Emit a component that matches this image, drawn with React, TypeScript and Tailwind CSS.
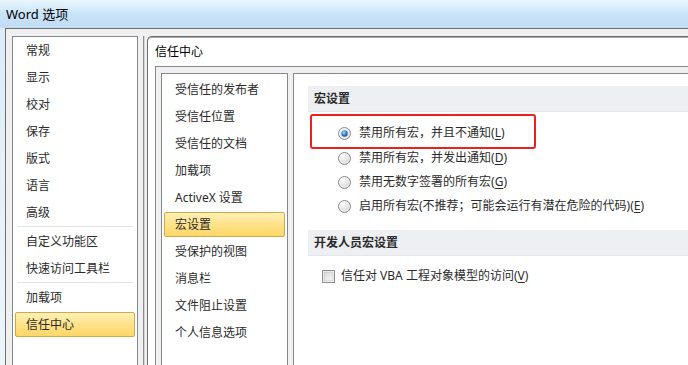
import React from "react";

const leftNav = [
  { label: "常规" },
  { label: "显示" },
  { label: "校对" },
  { label: "保存" },
  { label: "版式" },
  { label: "语言" },
  { label: "高级", sepAfter: true },
  { label: "自定义功能区" },
  { label: "快速访问工具栏", sepAfter: true },
  { label: "加载项" },
  { label: "信任中心", active: true },
];

const trustNav = [
  "受信任的发布者",
  "受信任位置",
  "受信任的文档",
  "加载项",
  "ActiveX 设置",
  "宏设置",
  "受保护的视图",
  "消息栏",
  "文件阻止设置",
  "个人信息选项",
];

const Radio = ({ checked }: { checked?: boolean }) => (
  <svg width="13" height="13" viewBox="0 0 13 13" className="shrink-0">
    <defs>
      <radialGradient id="rg" cx="0.35" cy="0.3" r="0.8">
        <stop offset="0" stopColor="#ffffff" />
        <stop offset="1" stopColor="#cfcfcf" />
      </radialGradient>
      <radialGradient id="rb" cx="0.4" cy="0.35" r="0.7">
        <stop offset="0" stopColor="#9fd8fb" />
        <stop offset="0.6" stopColor="#2e7fc9" />
        <stop offset="1" stopColor="#1c4f8f" />
      </radialGradient>
    </defs>
    <circle cx="6.5" cy="6.5" r="6" fill="url(#rg)" stroke="#8c8e90" strokeWidth="1" />
    <circle cx="6.5" cy="6.5" r="4.5" fill="none" stroke="#f4f4f4" strokeWidth="1" />
    {checked && <circle cx="6.5" cy="6.5" r="3.2" fill="url(#rb)" />}
  </svg>
);

const Check = () => (
  <svg width="13" height="13" viewBox="0 0 13 13" className="shrink-0">
    <defs>
      <linearGradient id="cg" x1="0" y1="0" x2="1" y2="1">
        <stop offset="0" stopColor="#d6d6d6" />
        <stop offset="1" stopColor="#fafafa" />
      </linearGradient>
    </defs>
    <rect x="0.5" y="0.5" width="12" height="12" fill="#fff" stroke="#8e8f8f" />
    <rect x="2" y="2" width="9" height="9" fill="url(#cg)" stroke="#b4b4b4" strokeWidth="0.6" />
  </svg>
);

const Acc = ({ text, k }: { text: string; k: string }) => (
  <span>
    {text}(<span className="underline underline-offset-2">{k}</span>)
  </span>
);

const NavItem = ({ label, active }: { label: string; active?: boolean }) => (
  <div
    className={
      "mx-[2px] h-[25px] flex items-center pl-[10px] border rounded-[2px] whitespace-nowrap " +
      (active
        ? "border-[#d2a94a] bg-gradient-to-b from-[#fff0b5] via-[#fee28a] to-[#fdd767]"
        : "border-transparent")
    }
  >
    {label}
  </div>
);

export default function App() {
  return (
    <div className="w-[688px] h-[365px] overflow-hidden flex flex-col text-[12px] leading-[16px] text-[#2b2b2b] font-['Noto_Sans','Noto_Sans_CJK_SC',sans-serif]">
      {/* title bar */}
      <div className="h-[28px] shrink-0 flex items-center pl-[6px] pb-[1px] text-[13px] text-black bg-gradient-to-b from-[#eaf7fe] via-[#c9e4f9] to-[#c2dcf3]">
        Word 选项
      </div>

      <div className="flex flex-1 min-h-0">
        <div className="w-[5px] bg-gradient-to-b from-[#dcecf8] to-[#eef6fc]" />

        <div className="flex-1 flex border-l border-t border-[#6f6f6f] bg-[#f0f0f0] pl-[6px] pt-[7px]">
          {/* left navigation */}
          <div className="w-[126px] shrink-0 border-l border-t border-r border-[#828790] bg-white pt-[1px] flex flex-col">
            {leftNav.map((item) => (
              <React.Fragment key={item.label}>
                <div className="mb-[2px]">
                  <NavItem label={item.label} active={item.active} />
                </div>
                {item.sepAfter && <div className="mx-[4px] mt-[-1px] mb-[2px] h-px bg-[#e2e3e6]" />}
              </React.Fragment>
            ))}
          </div>

          {/* splitter */}
          <div className="w-[9px] shrink-0 pl-[5px]">
            <div className="h-full w-[2px] border-l border-[#8c8c8c] bg-[#d6d6d6]" />
          </div>

          {/* trust center panel */}
          <div className="flex-1 flex flex-col border-l border-t border-[#6d6d6d] rounded-tl-[5px] bg-white shadow-[inset_0_1px_0_#a9a9a9]">
            <div className="h-[29px] shrink-0 flex items-center pl-[7px] pt-[1px] text-[12px] text-black">
              信任中心
            </div>

            <div className="flex-1 flex ml-[7px] border-l border-t border-[#8a8a8a] bg-[#f0f0f0] pl-[5px] pt-[6px]">
              {/* trust center list */}
              <div className="w-[127px] shrink-0 border-l border-t border-r border-[#828790] bg-white pt-[3px] flex flex-col gap-[2px]">
                {trustNav.map((t) => (
                  <NavItem key={t} label={t} active={t === "宏设置"} />
                ))}
              </div>

              {/* settings content */}
              <div className="flex-1 ml-[5px] border-l border-t border-[#8a8a8a] bg-white pl-[14px] pt-[12px] flex flex-col">
                <div className="h-[26px] flex items-center pl-[6px] font-bold bg-[#eeeff2] border-b border-[#e4e5e9]">
                  宏设置
                </div>

                <div className="mt-[2px] ml-[2px] w-[226px] h-[35px] border-2 border-[#e8231f] rounded-[3px] pl-[26px] pt-[7px]">
                  <div className="h-[20px] flex items-center gap-[8px] whitespace-nowrap">
                    <Radio checked />
                    <Acc text="禁用所有宏，并且不通知" k="L" />
                  </div>
                </div>

                <div className="flex flex-col gap-[6px] pl-[30px]">
                  <div className="h-[18px] flex items-center gap-[8px] whitespace-nowrap">
                    <Radio />
                    <Acc text="禁用所有宏，并发出通知" k="D" />
                  </div>
                  <div className="h-[18px] flex items-center gap-[8px] whitespace-nowrap">
                    <Radio />
                    <Acc text="禁用无数字签署的所有宏" k="G" />
                  </div>
                  <div className="h-[18px] flex items-center gap-[8px] whitespace-nowrap">
                    <Radio />
                    <Acc text="启用所有宏(不推荐；可能会运行有潜在危险的代码)" k="E" />
                  </div>
                </div>

                <div className="mt-[15px] h-[26px] flex items-center pl-[6px] font-bold bg-[#eeeff2] border-b border-[#e4e5e9]">
                  开发人员宏设置
                </div>

                <div className="mt-[11px] ml-[14px] h-[18px] flex items-center gap-[6px] whitespace-nowrap">
                  <Check />
                  <Acc text="信任对 VBA 工程对象模型的访问" k="V" />
                </div>
              </div>
            </div>
          </div>
        </div>
      </div>
    </div>
  );
}
